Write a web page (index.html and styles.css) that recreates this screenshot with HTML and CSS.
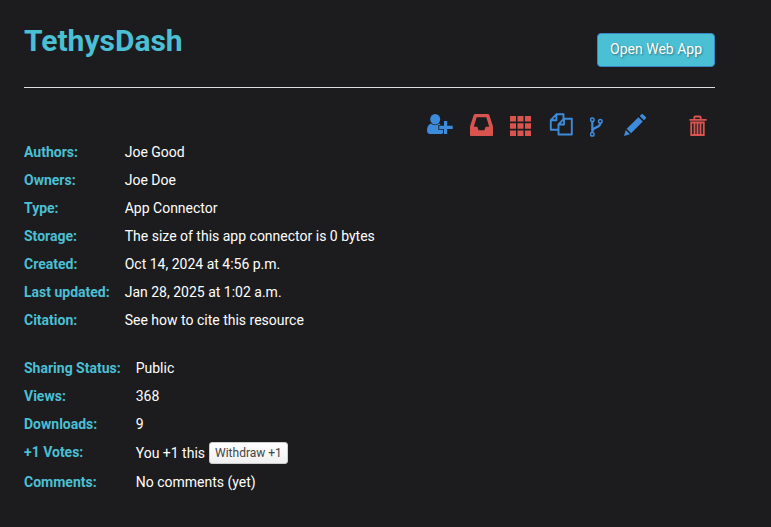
FILE: index.html
```html
<!DOCTYPE html>
<html lang="en">
<head>
<meta charset="utf-8">
<title>TethysDash</title>
<meta name="viewport" content="width=device-width, initial-scale=1">
<link rel="stylesheet" href="styles.css">
</head>
<body>
<main class="resource">
  <header class="resource-header">
    <h1 class="title">TethysDash</h1>
    <button class="btn btn-open" type="button">Open Web App</button>
  </header>

  <nav class="actions" aria-label="Resource actions">
    <button class="action" type="button" aria-label="Manage access">
      <svg width="26" height="24" viewBox="0 0 26 24" fill="currentColor">
        <ellipse cx="8.2" cy="6.2" rx="5" ry="5.2"/>
        <path d="M4 10.6C1.4 11.3 0 14 0 17.8C0 19.8 1.2 21 3 21H13.8C15 21 15.600 20.600 16 20V16.800H11.300V11.900H13.600C13.200 11.200 12.700 10.800 12 10.600C9.800 12.800 6.400 12.800 4 10.600Z"/>
        <path d="M17 8H20.200V12.700H25.700V15.900H20.200V21H17V15.900H12.200V12.700H17Z"/>
      </svg>
    </button>
    <button class="action danger" type="button" aria-label="Add to inbox">
      <svg width="23" height="24" viewBox="0 0 23 24" fill="currentColor" fill-rule="evenodd">
        <path d="M4.8 1H18.2L19.2 1.8L23 13.5V22.2Q23 23 22.2 23H.8Q0 23 0 22.2V13.5L3.8 1.8ZM6.7 4.3L3.8 13.8H7.3L8.6 17.2H14.4L15.7 13.8H19.2L16.3 4.3Z"/>
      </svg>
    </button>
    <button class="action danger" type="button" aria-label="Add to collection">
      <svg width="22" height="24" viewBox="0 0 22 24" fill="currentColor">
        <path d="M0 3h6v5.500h-6zM7.500 3h6v5.500h-6zM15 3h6v5.500h-6zM0 10.200h6v5.500h-6zM7.500 10.200h6v5.500h-6zM15 10.200h6v5.500h-6zM0 17.400h6v5.500h-6zM7.500 17.400h6v5.500h-6zM15 17.400h6v5.500h-6z"/>
      </svg>
    </button>
    <button class="action" type="button" aria-label="Copy resource">
      <svg width="24" height="24" viewBox="0 0 24 24" fill="none" stroke="currentColor" stroke-width="1.9" stroke-linejoin="round">
        <path d="M9.500 16.700H1.800V7.200L7.300 1.300H14.500V5.700M7.400 1.500V7.300H2M15 5.700H22.800V21.500H9.500V11.300L15 5.700ZM15 5.900V11.500H9.700"/>
      </svg>
    </button>
    <button class="action" type="button" aria-label="New version">
      <svg width="16" height="24" viewBox="0 0 16 24" fill="none" stroke="currentColor" stroke-width="1.5">
        <circle cx="2.300" cy="6.700" r="1.800"/>
        <circle cx="2.300" cy="21.300" r="1.800"/>
        <circle cx="10.300" cy="8.300" r="1.800"/>
        <path stroke-width="2.200" d="M2.300 8.600V19.400M10.300 10.300C10.300 15.600 2.600 13.200 2.400 18.300"/>
      </svg>
    </button>
    <button class="action" type="button" aria-label="Edit">
      <svg width="24" height="24" viewBox="0 0 24 24" fill="currentColor">
        <path d="M1 23L2.700 17L7 21.300ZM3.700 15.800L15.400 4.200L19.800 8.600L8.100 20.200ZM16.700 3L18.500 1.200Q19.200.6 19.900 1.200L22.800 4.100Q23.400 4.800 22.800 5.500L21 7.300Z"/>
      </svg>
    </button>
    <button class="action danger action-delete" type="button" aria-label="Delete">
      <svg width="18" height="24" viewBox="0 0 18 24" fill="none" stroke="currentColor" stroke-width="1.8">
        <path d="M.4 6.800H17.600M5.300 6V4.500Q5.300 3.500 6.300 3.500H10.700Q11.700 3.500 11.700 4.500V6M2.200 9.500H14.800V22H2.200ZM5.500 10V22M8.500 10V22M11.500 10V22"/>
      </svg>
    </button>
  </nav>

  <table class="details">
    <tbody>
      <tr><th scope="row">Authors:</th><td><a href="#">Joe Good</a></td></tr>
      <tr><th scope="row">Owners:</th><td><a href="#">Joe Doe</a></td></tr>
      <tr><th scope="row">Type:</th><td>App Connector</td></tr>
      <tr><th scope="row">Storage:</th><td>The size of this app connector is 0 bytes</td></tr>
      <tr><th scope="row">Created:</th><td>Oct 14, 2024 at 4:56 p.m.</td></tr>
      <tr><th scope="row">Last updated:</th><td>Jan 28, 2025 at 1:02 a.m.</td></tr>
      <tr><th scope="row">Citation:</th><td><a href="#">See how to cite this resource</a></td></tr>
    </tbody>
  </table>

  <table class="details">
    <tbody>
      <tr><th scope="row">Sharing Status:</th><td>Public</td></tr>
      <tr><th scope="row">Views:</th><td>368</td></tr>
      <tr><th scope="row">Downloads:</th><td>9</td></tr>
      <tr><th scope="row">+1 Votes:</th><td><div class="vote"><span>You +1 this</span><button class="btn btn-vote" type="button">Withdraw +1</button></div></td></tr>
      <tr><th scope="row">Comments:</th><td><a href="#">No comments (yet)</a></td></tr>
    </tbody>
  </table>
</main>
</body>
</html>
```
FILE: styles.css
```css
* {
  box-sizing: border-box;
}

body {
  margin: 0;
  background: #1c1c1e;
  color: #fff;
  font: 14px/20px Roboto, "Liberation Sans", sans-serif;
}

.resource {
  padding: 20px 56px 20px 24px;
}

.resource-header {
  display: flex;
  justify-content: space-between;
  align-items: flex-start;
  padding-bottom: 20px;
  border-bottom: 1px solid #ddd;
}

.title {
  margin: 0;
  color: #4bbfd3;
  font-size: 30px;
  font-weight: 700;
  line-height: 42px;
}

.btn {
  border: 1px solid;
  border-radius: 4px;
  font-family: inherit;
  cursor: pointer;
}

.btn-open {
  margin-top: 13px;
  padding: 5px 12px 7px;
  background: #4bbfd3;
  border-color: #3a87c8;
  color: #fff;
  font-size: 14px;
  line-height: 20px;
  text-shadow: 1px 1px 2px rgba(0, 0, 0, 0.4);
}

.actions {
  display: flex;
  justify-content: flex-end;
  gap: 17px;
  padding: 25px 8px 1px 0;
}

.action {
  padding: 0;
  border: 0;
  background: none;
  color: #3d8bdb;
  cursor: pointer;
}

.action svg {
  display: block;
}

.danger {
  color: #d9534f;
}

.action-delete {
  margin-left: 25px;
}

.details {
  margin-bottom: 20px;
  border-collapse: collapse;
}

.details th {
  padding: 4px 15px 4px 0;
  color: #4bbfd3;
  font-weight: 700;
  text-align: left;
  vertical-align: top;
  white-space: nowrap;
}

.details td {
  padding: 4px 0;
  vertical-align: top;
}

.details a {
  color: inherit;
  text-decoration: none;
}

.vote {
  display: flex;
  align-items: center;
  gap: 4px;
}

.btn-vote {
  padding: 1px 5px;
  border-color: #ccc;
  border-radius: 3px;
  background: linear-gradient(#fff, #f0f0f0);
  color: #444;
  font-size: 12px;
  line-height: 18px;
}
```
